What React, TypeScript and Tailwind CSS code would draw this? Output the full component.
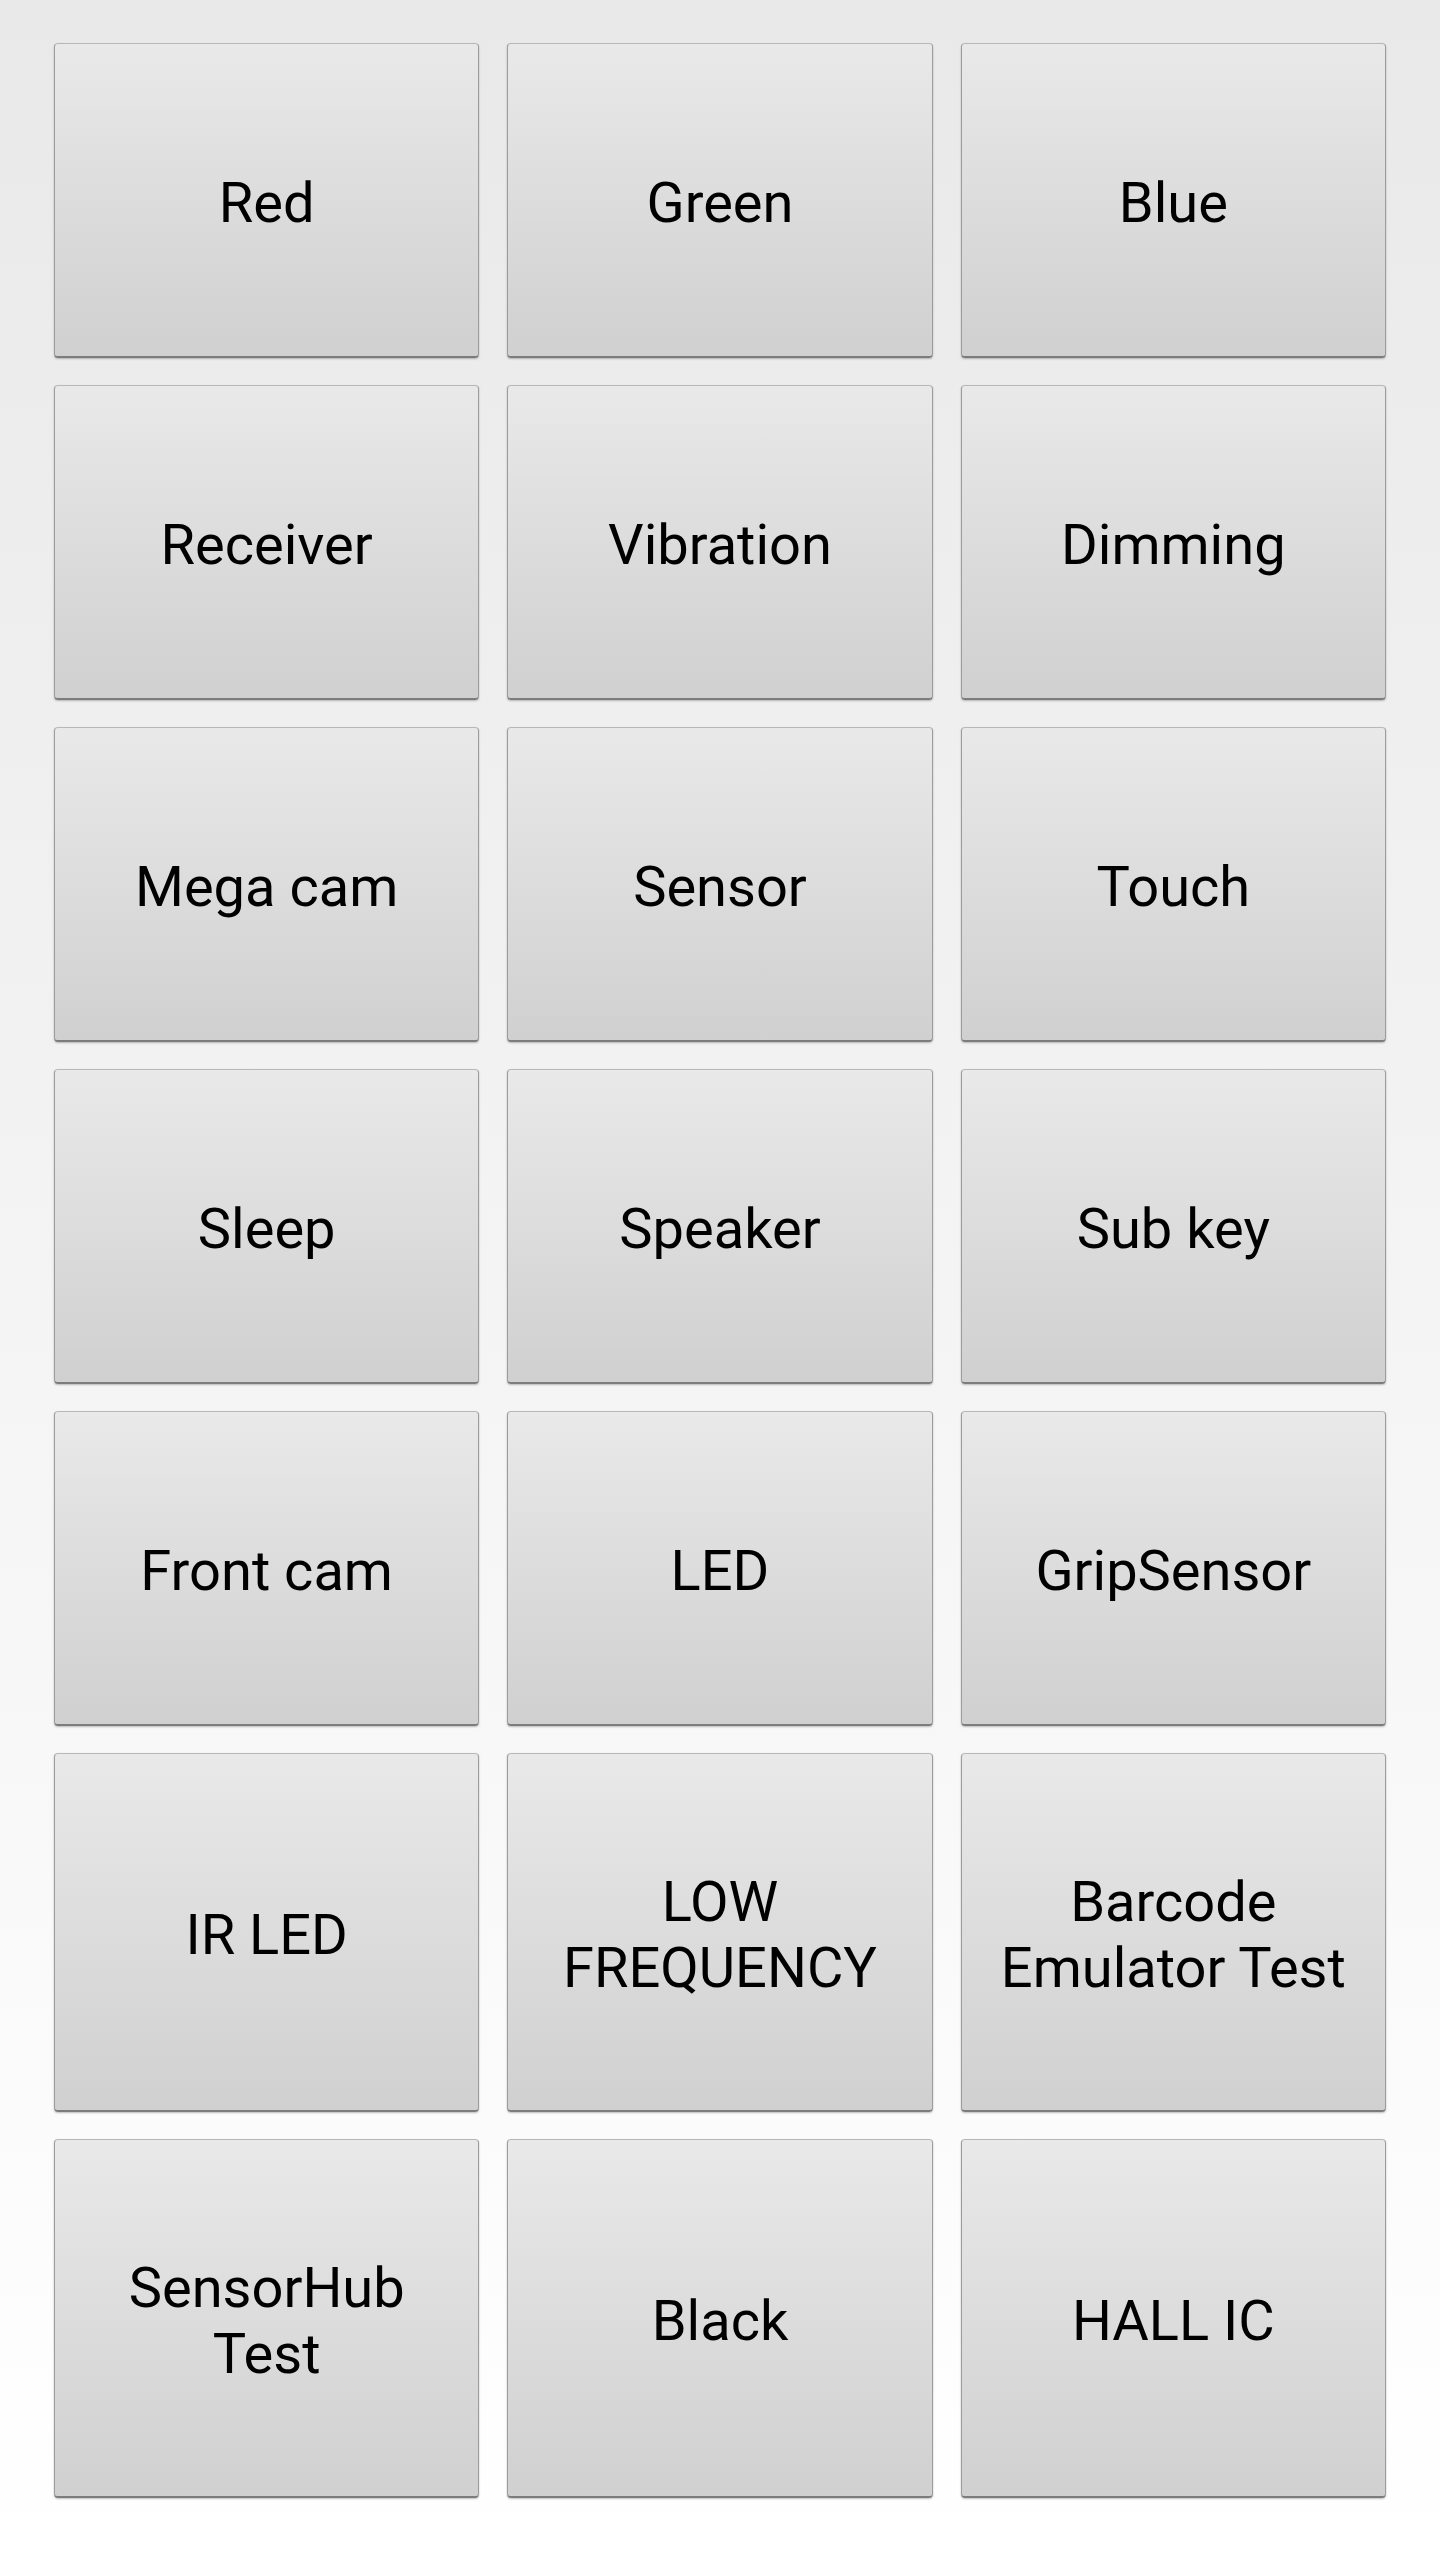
import React from "react";

type Row = { labels: string[]; tall?: boolean };

const rows: Row[] = [
  { labels: ["Red", "Green", "Blue"] },
  { labels: ["Receiver", "Vibration", "Dimming"] },
  { labels: ["Mega cam", "Sensor", "Touch"] },
  { labels: ["Sleep", "Speaker", "Sub key"] },
  { labels: ["Front cam", "LED", "GripSensor"] },
  { labels: ["IR LED", "LOW\nFREQUENCY", "Barcode\nEmulator Test"], tall: true },
  { labels: ["SensorHub\nTest", "Black", "HALL IC"], tall: true },
];

const TestButton: React.FC<{ label: string; tall?: boolean }> = ({ label, tall }) => (
  <button
    className={`${
      tall ? "h-[359px]" : "h-[315px]"
    } flex items-center justify-center rounded-[4px] border border-t-[#b8b8b8] border-x-[#9c9c9c] border-b-[2px] border-b-[#7c7c7c] bg-gradient-to-b from-[#e9e9e9] to-[#d0d0d0] shadow-[0_1px_2px_rgba(0,0,0,0.25)] px-4 pt-[5px] text-center text-[56px] leading-[66px] text-black whitespace-pre-line`}
  >
    {label}
  </button>
);

export default function App() {
  return (
    <div
      className="min-h-[2560px] w-[1440px] bg-gradient-to-b from-[#e9e9e9] to-[#ffffff] pl-[54px] pr-[54px] pt-[43px]"
      style={{ fontFamily: "Roboto, 'Noto Sans', sans-serif" }}
    >
      <div className="grid grid-cols-3 gap-x-[28px] gap-y-[27px]">
        {rows.map((row) =>
          row.labels.map((label) => (
            <TestButton key={label} label={label} tall={row.tall} />
          ))
        )}
      </div>
    </div>
  );
}
